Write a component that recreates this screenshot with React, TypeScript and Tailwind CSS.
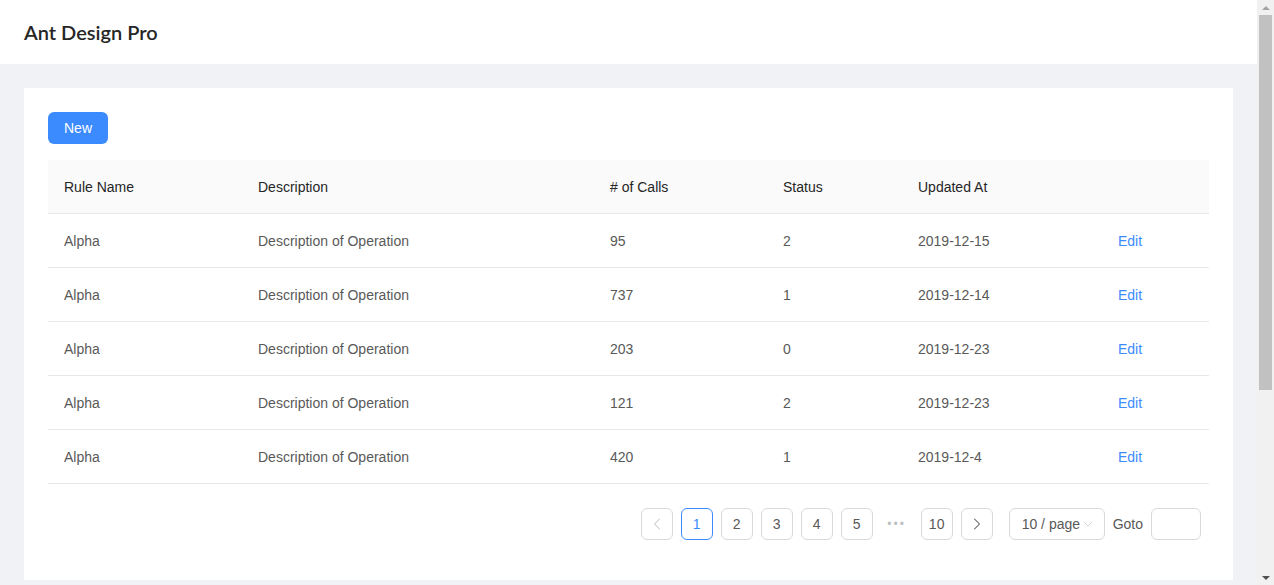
import { ChevronLeft, ChevronRight, ChevronDown } from 'lucide-react';

type Rule = {
    name: string;
    desc: string;
    calls: number;
    status: number;
    updatedAt: string;
};

const rules: Rule[] = [
    { name: 'Alpha', desc: 'Description of Operation', calls: 95, status: 2, updatedAt: '2019-12-15' },
    { name: 'Alpha', desc: 'Description of Operation', calls: 737, status: 1, updatedAt: '2019-12-14' },
    { name: 'Alpha', desc: 'Description of Operation', calls: 203, status: 0, updatedAt: '2019-12-23' },
    { name: 'Alpha', desc: 'Description of Operation', calls: 121, status: 2, updatedAt: '2019-12-23' },
    { name: 'Alpha', desc: 'Description of Operation', calls: 420, status: 1, updatedAt: '2019-12-4' },
];

// column widths measured off the design
const cols = ['w-[194px]', 'w-[352px]', 'w-[173px]', 'w-[135px]', 'w-[200px]', 'flex-1'];

function PageItem({ children, active }: { children: React.ReactNode; active?: boolean }) {
    return (
        <div
            className={
                active
                    ? 'w-8 h-8 flex items-center justify-center rounded-md border border-[#3b8bff] text-[#3b8bff] bg-white'
                    : 'w-8 h-8 flex items-center justify-center rounded-md border border-[#d9d9d9] text-[#595959] bg-white'
            }
        >
            {children}
        </div>
    );
}

// window scrollbar as seen in the screenshot
function Scrollbar() {
    return (
        <div className="w-[17px] shrink-0 h-[585px] bg-[#f1f1f1] flex flex-col items-center">
            <div className="h-[15px] flex items-center justify-center">
                <div className="w-0 h-0 border-l-4 border-r-4 border-b-4 border-l-transparent border-r-transparent border-b-[#a3a3a3]" />
            </div>
            <div className="w-[13px] h-[375px] bg-[#c1c1c1]" />
            <div className="flex-1" />
            <div className="h-[15px] flex items-center justify-center">
                <div className="w-0 h-0 border-l-4 border-r-4 border-t-4 border-l-transparent border-r-transparent border-t-[#505050]" />
            </div>
        </div>
    );
}

export default function App() {
    return (
        <div className="flex h-[585px] overflow-hidden font-['Liberation_Sans',Arial,sans-serif]">
            <div className="flex-1 min-h-[860px] bg-[#f0f2f5] text-sm text-[#595959]">
                <header className="h-16 bg-white flex items-center px-6">
                    <h1 className="text-xl font-semibold text-[#262626] font-['Lato','Liberation_Sans',sans-serif]">Ant Design Pro</h1>
                </header>

                <div className="p-6">
                    <div className="bg-white p-6">
                        <button className="h-8 px-4 rounded-md bg-[#3b8bff] text-white text-sm font-medium">New</button>

                        <div className="mt-4">
                            {/* header */}
                            <div className="flex h-[54px] items-center bg-[#fafafa] border-b border-[#e8e8e8] text-[#262626] font-medium">
                                <div className={`${cols[0]} px-4`}>Rule Name</div>
                                <div className={`${cols[1]} px-4`}>Description</div>
                                <div className={`${cols[2]} px-4`}># of Calls</div>
                                <div className={`${cols[3]} px-4`}>Status</div>
                                <div className={`${cols[4]} px-4`}>Updated At</div>
                                <div className={`${cols[5]} px-4`}></div>
                            </div>

                            {rules.map((r, i) => (
                                <div key={i} className="flex h-[54px] items-center border-b border-[#e8e8e8]">
                                    <div className={`${cols[0]} px-4`}>{r.name}</div>
                                    <div className={`${cols[1]} px-4`}>{r.desc}</div>
                                    <div className={`${cols[2]} px-4`}>{r.calls}</div>
                                    <div className={`${cols[3]} px-4`}>{r.status}</div>
                                    <div className={`${cols[4]} px-4`}>{r.updatedAt}</div>
                                    <div className={`${cols[5]} px-4`}>
                                        <a className="text-[#3b8bff] cursor-pointer">Edit</a>
                                    </div>
                                </div>
                            ))}
                        </div>

                        <div className="mt-6 mb-4 flex items-center justify-end gap-2 pr-2">
                            <PageItem>
                                <ChevronLeft className="w-5 h-5 text-[#c8c8c8]" strokeWidth={1.25} />
                            </PageItem>
                            <PageItem active>1</PageItem>
                            <PageItem>2</PageItem>
                            <PageItem>3</PageItem>
                            <PageItem>4</PageItem>
                            <PageItem>5</PageItem>
                            <div className="w-8 h-8 flex items-center justify-center text-[#bfbfbf] tracking-[2px] text-xs">•••</div>
                            <PageItem>10</PageItem>
                            <PageItem>
                                <ChevronRight className="w-5 h-5 text-[#595959]" strokeWidth={1.25} />
                            </PageItem>
                            <div className="ml-2 w-24 h-8 flex items-center rounded-md border border-[#d9d9d9] pl-3">
                                <span>10 / page</span>
                                <ChevronDown className="w-4 h-4 text-[#bfbfbf]" strokeWidth={1} />
                            </div>
                            <span>Goto</span>
                            <input className="w-[50px] h-8 rounded-md border border-[#d9d9d9] outline-none" />
                        </div>
                    </div>
                </div>
            </div>
            <Scrollbar />
        </div>
    );
}
